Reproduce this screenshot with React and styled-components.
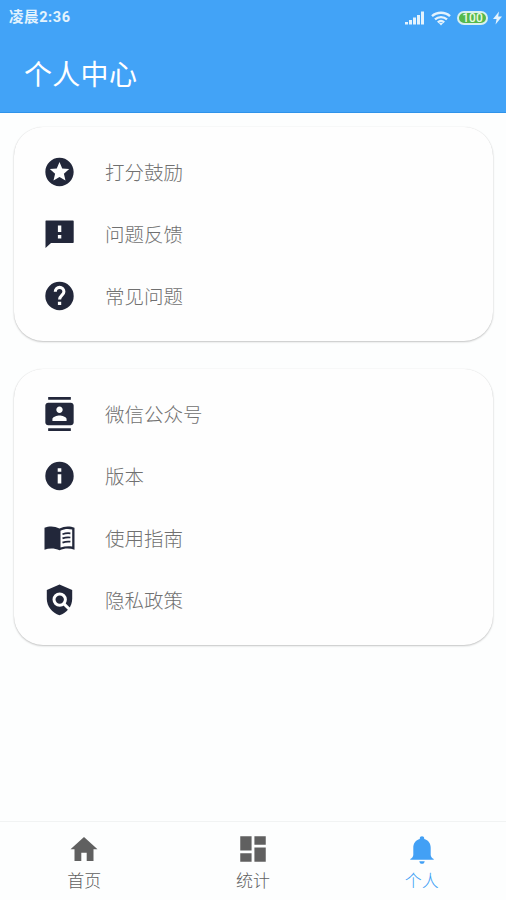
import React, { useState } from 'react'
import styled, { createGlobalStyle } from 'styled-components';
import { MdStars, MdContacts, MdDashboard } from 'react-icons/md';

const GlobalStyle = createGlobalStyle`
  * {
    box-sizing: border-box;
  }

  body {
    margin: 0;
    background-color: #fdfefe;
    font-family: Roboto, 'Noto Sans CJK SC', sans-serif;
  }
`

const Screen = styled.div`
  height: 100vh;
  display: flex;
  flex-direction: column;
  overflow: hidden;
`

const Header = styled.header`
  height: 113px;
  flex-shrink: 0;
  background-color: #42a3f7;
  border-bottom: 1px solid #2f93ea;
  color: #fff;
`

const StatusBar = styled.div`
  height: 36px;
  display: flex;
  align-items: center;
  justify-content: space-between;
  padding: 0 4px 0 9px;
  color: #e4f3fd;
`

const Time = styled.span`
  font-size: 14.5px;
  font-weight: 700;
  line-height: 20px;
  letter-spacing: 0.6px;
`

const StatusIcons = styled.div`
  display: flex;
  align-items: center;

  svg {
    display: block;
  }

  .wifi {
    margin-left: 6px;
  }

  .bolt {
    margin-left: 5px;
  }
`

const Battery = styled.div`
  width: 31px;
  height: 14px;
  margin-left: 6px;
  display: flex;
  align-items: center;
  justify-content: center;
  border: 2px solid #d8f0ee;
  border-radius: 7px;
  background-color: #55b94c;
  color: #e9fbe0;
  font-size: 12px;
  font-weight: 500;
  line-height: 10px;
`

const Title = styled.h1`
  margin: 0;
  padding: 20px 0 0 24px;
  font-size: 28px;
  font-weight: 400;
  line-height: 40px;
  letter-spacing: 0.3px;
`

const Content = styled.main`
  flex: 1;
  display: flex;
  flex-direction: column;
  gap: 28px;
  padding: 14px 13px 0 14px;
`

const Card = styled.section`
  padding: 14px 0 14px 28px;
  background-color: #fefefe;
  border-radius: 29px;
  box-shadow: 0 1px 2px rgba(0, 0, 0, 0.22), 0 0 1px rgba(0, 0, 0, 0.12);
`

const Row = styled.div`
  height: 62px;
  display: flex;
  align-items: center;
  gap: 28px;
  color: #707070;
  font-size: 19.5px;
  font-weight: 300;
  line-height: 28px;
  cursor: pointer;

  svg {
    width: 35px;
    height: 34px;
    color: #22273a;
  }

  span {
    padding-top: 3px;
  }
`

const TabBar = styled.nav`
  height: 79px;
  flex-shrink: 0;
  display: flex;
  border-top: 1px solid #f1f3f3;
`

const Tab = styled.button`
  flex: 1;
  display: flex;
  flex-direction: column;
  align-items: center;
  padding: 10px 0 0;
  border: none;
  background: transparent;
  color: ${props => props.$active ? '#42a0f5' : '#606060'};
  font-family: inherit;
  font-size: 17px;
  line-height: 24px;
  cursor: pointer;

  svg {
    width: 34px;
    height: 34px;
    display: block;
  }
`

const TabLabel = styled.span`
  margin-top: 3px;
  font-weight: 300;
`

function FeedbackIcon() {
  return (
    <svg viewBox="0 0 34 34">
      <path fill="currentColor" d="M3.500 3.500h27a.7.7 0 0 1 .7.7v21a.7.7 0 0 1-.7.7H8.500L3 31V4.200a.7.7 0 0 1 .5-.7z" />
      <path fill="#fff" d="M15.400 8.500h3.400v6.600h-3.400zM15.400 18h3.400v3.400h-3.400z" />
    </svg>
  )
}

function HelpIcon() {
  return (
    <svg viewBox="0 0 34 34">
      <circle cx="17" cy="17" r="14.200" fill="currentColor" />
      <path fill="none" stroke="#fff" strokeWidth="3.100" d="M12.800 12.700a4.300 4.300 0 1 1 8.600 0c0 3.200-4.300 3.600-4.300 7.800" />
      <path fill="#fff" d="M15.400 22.800h3.300v3.300h-3.300z" />
    </svg>
  )
}

function InfoIcon() {
  return (
    <svg viewBox="0 0 34 34">
      <circle cx="17" cy="17" r="14.200" fill="currentColor" />
      <path fill="#fff" d="M15.200 9.300h3.600v3.500h-3.600zM15.200 15.200h3.600v9.200h-3.600z" />
    </svg>
  )
}

function BookIcon() {
  return (
    <svg viewBox="0 0 34 34">
      <path fill="currentColor" d="M2 6.800C6.500 4.800 12 4.800 17 7.500c5-2.700 10.500-2.700 15-.7V28.800c-4.500-1.700-10-1.700-15 .4-5-2.100-10.500-2.100-15-.4z" />
      <path fill="#fff" d="M18 9.700c3.700-1.900 7.700-2.300 11.700-1.200v17c-4-.7-8-.3-11.700 1.100z" />
      <path fill="none" stroke="currentColor" strokeWidth="1.700" d="M20 13.200c2.600-1 5.200-1.300 7.900-.9M20 17.400c2.600-1 5.200-1.300 7.900-.9M20 21.600c2.600-1 5.200-1.300 7.900-.9" />
    </svg>
  )
}

function PolicyIcon() {
  return (
    <svg viewBox="0 0 34 34">
      <path fill="currentColor" d="M17 1.400L4.300 7v8.800c0 7.500 5.400 14.400 12.700 16.500 7.300-2.100 12.700-9 12.700-16.500V7z" />
      <circle cx="17.200" cy="16.600" r="5.700" fill="none" stroke="#fff" strokeWidth="3" />
      <path stroke="#fff" strokeWidth="3" d="M21 20.400l6.400 6.300" />
    </svg>
  )
}

function HomeIcon() {
  return (
    <svg viewBox="0 0 34 34">
      <path fill="currentColor" d="M17 5L3.500 17.300h4V29h6.800v-8.200h5.400V29h6.800V17.300h4z" />
    </svg>
  )
}

function BellIcon() {
  return (
    <svg viewBox="0 0 34 34">
      <path fill="currentColor" d="M17 4.300c1.300 0 2.200.9 2.200 2v.7c4.100 1 6.500 4.500 6.500 8.700v7c0 2 1.200 3.200 3 4.200v.9H5.300v-.9c1.800-1 3-2.200 3-4.200v-7c0-4.200 2.400-7.700 6.500-8.700v-.7c0-1.100.9-2 2.200-2zM14.300 29.200h5.400c-.2 1.700-1.200 2.600-2.700 2.600s-2.500-.9-2.700-2.600z" />
    </svg>
  )
}

const groups = [
  [
    { icon: MdStars, text: '打分鼓励' },
    { icon: FeedbackIcon, text: '问题反馈' },
    { icon: HelpIcon, text: '常见问题' },
  ],
  [
    { icon: MdContacts, text: '微信公众号' },
    { icon: InfoIcon, text: '版本' },
    { icon: BookIcon, text: '使用指南' },
    { icon: PolicyIcon, text: '隐私政策' },
  ],
]

const tabs = [
  { id: 'home', icon: HomeIcon, text: '首页' },
  { id: 'stats', icon: MdDashboard, text: '统计' },
  { id: 'me', icon: BellIcon, text: '个人' },
]

function Status() {
  return (
    <StatusBar>
      <Time>凌晨2:36</Time>
      <StatusIcons>
        <svg width="20" height="14" viewBox="0 0 20 14" fill="currentColor">
          <rect x="0" y="11" width="3" height="2.500" />
          <rect x="4" y="9" width="3" height="4.500" />
          <rect x="8" y="6.500" width="3" height="7" />
          <rect x="12" y="4" width="3" height="9.500" />
          <rect x="16" y="0.500" width="3" height="13" />
        </svg>
        <svg className="wifi" width="20" height="15" viewBox="0 0 20 15" fill="none" stroke="currentColor" strokeWidth="2.400">
          <path d="M1 5.200c5-4.600 13-4.600 18 0" />
          <path d="M4 8.400c3.400-3 8.600-3 12 0" />
          <path d="M6.800 11.300c1.900-1.600 4.500-1.600 6.400 0" />
          <path d="M7.800 12h4.400L10 14.600z" fill="currentColor" stroke="none" />
        </svg>
        <Battery>100</Battery>
        <svg className="bolt" width="9" height="14" viewBox="0 0 9 14" fill="currentColor">
          <path d="M6 0.500L0 8h3.600L2.500 13.500 9 5.500H5.200z" />
        </svg>
      </StatusIcons>
    </StatusBar>
  )
}

export default function App() {

  const [active, setActive] = useState('me');

  return (
    <>
      <GlobalStyle />
      <Screen>
        <Header>
          <Status />
          <Title>个人中心</Title>
        </Header>
        <Content>
          {groups.map((items, i) => (
            <Card key={i}>
              {items.map(({ icon: Icon, text }) => (
                <Row key={text}>
                  <Icon />
                  <span>{text}</span>
                </Row>
              ))}
            </Card>
          ))}
        </Content>
        <TabBar>
          {tabs.map(({ id, icon: Icon, text }) => (
            <Tab key={id} $active={active === id} onClick={() => setActive(id)}>
              <Icon />
              <TabLabel>{text}</TabLabel>
            </Tab>
          ))}
        </TabBar>
      </Screen>
    </>
  )
}
